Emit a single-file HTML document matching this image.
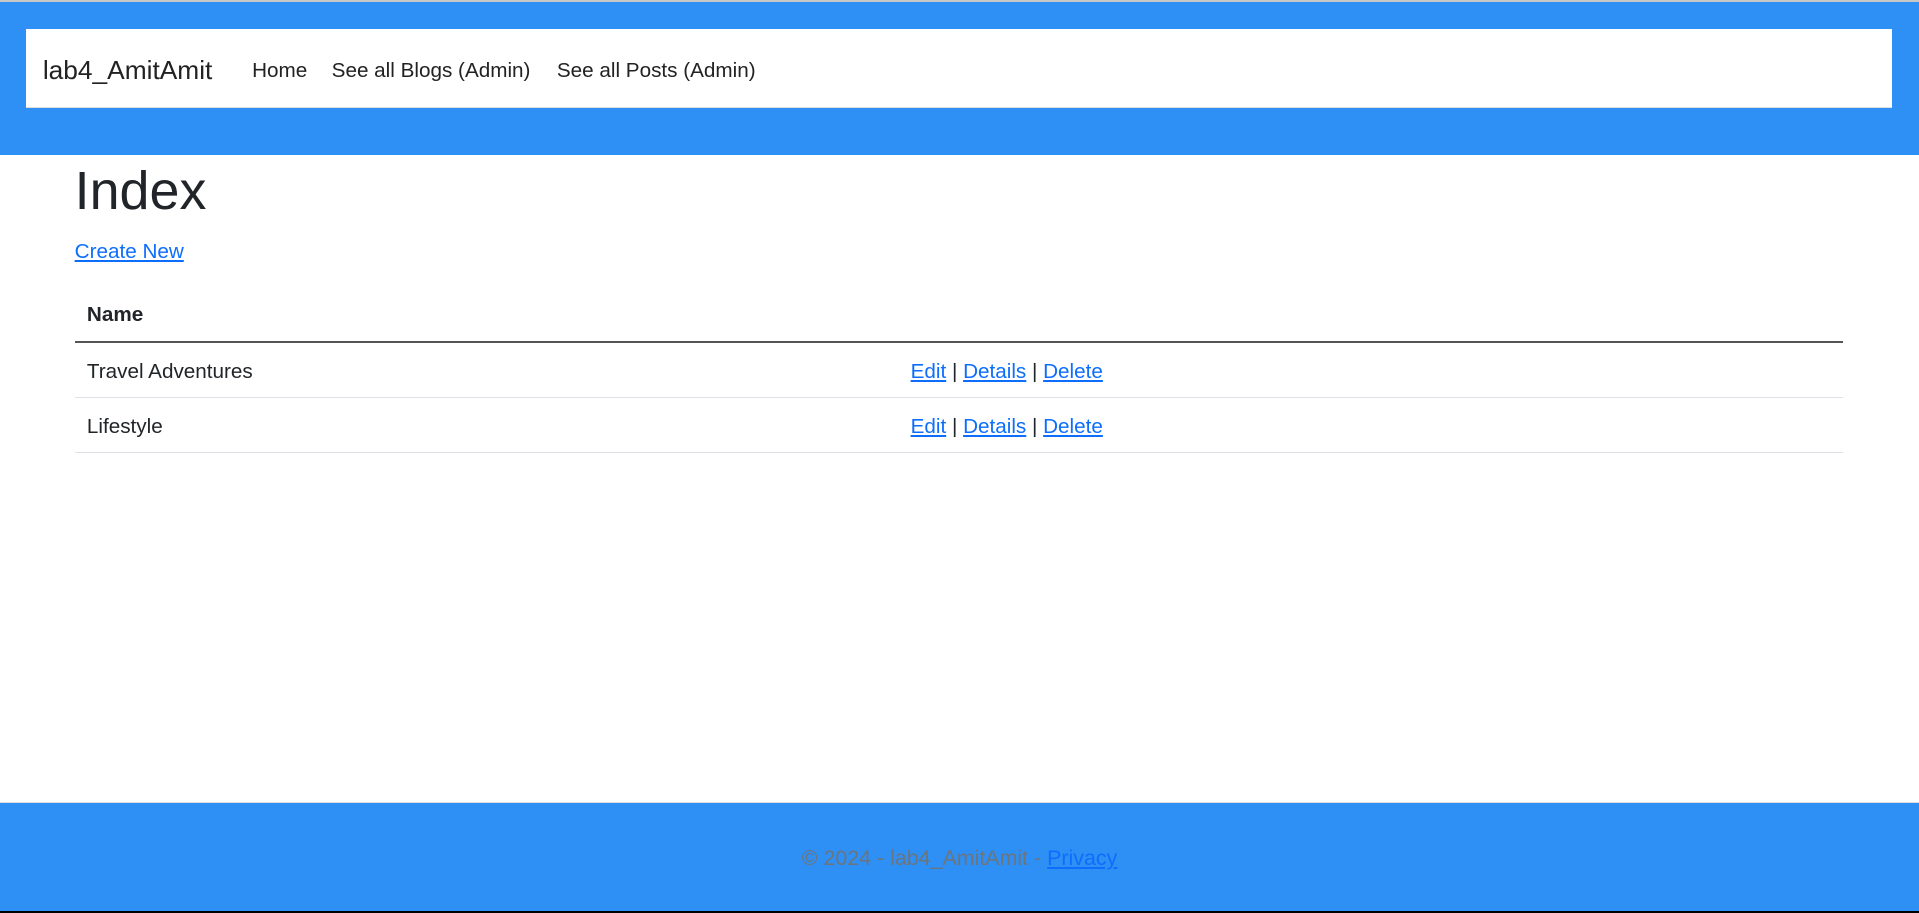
<!DOCTYPE html>
<html><head><meta charset="utf-8"><style>
html,body{margin:0;padding:0;background:#fff;overflow:hidden}
body{zoom:1.2239;width:1568px;height:746px;position:relative;font-family:"Liberation Sans",sans-serif;color:#212529;font-size:16.9px}
.hdr{position:absolute;left:0;top:0;width:1568px;height:127px;background:#2e8ff5;border-top:2px solid #c8c8c8;box-sizing:border-box}
.nav{position:absolute;left:21px;top:22px;width:1525px;height:65px;background:#fff;border-bottom:1px solid #ddd;box-sizing:border-box}
.brand{position:absolute;left:14px;top:21px;font-size:21.5px;line-height:26px;color:#222}
.lk{position:absolute;top:24px;font-size:16.9px;line-height:22px;color:#222}
h1{position:absolute;left:61px;top:131px;margin:0;font-size:44px;font-weight:400;line-height:52px}
a{color:#0d6efd;text-decoration:underline}
.cn{position:absolute;left:61px;top:195px;line-height:22px}
.tbl{position:absolute;left:61px;top:236px;width:1445px}
.r{position:relative;height:45px;border-bottom:1px solid #dee2e6;box-sizing:border-box}
.r.h{height:44px;border-bottom:2px solid #555}
.r span{position:absolute;left:10px;top:13px;line-height:22px}
.r.h span{top:11px}
.r .c2{left:683px}
.ftr{position:absolute;left:0;top:655px;width:1568px;height:89px;background:#2e8ff5;border-top:1px solid #ddd;box-sizing:border-box}
.ftr div{position:absolute;left:0;right:0;top:35px;text-align:center;color:#6c757d;line-height:22px;font-size:17.5px}
.blk{position:absolute;left:0;top:744px;width:1568px;height:2px;background:#000}
</style></head><body>
<div class="hdr"><div class="nav">
<div class="brand">lab4_AmitAmit</div>
<div class="lk" style="left:185px">Home</div>
<div class="lk" style="left:250px">See all Blogs (Admin)</div>
<div class="lk" style="left:434px">See all Posts (Admin)</div>
</div></div>
<h1>Index</h1>
<a class="cn">Create New</a>
<div class="tbl">
<div class="r h"><span style="font-weight:bold">Name</span></div>
<div class="r"><span>Travel Adventures</span><span class="c2"><a>Edit</a> | <a>Details</a> | <a>Delete</a></span></div>
<div class="r"><span>Lifestyle</span><span class="c2"><a>Edit</a> | <a>Details</a> | <a>Delete</a></span></div>
</div>
<div class="ftr"><div>© 2024 - lab4_AmitAmit - <a>Privacy</a></div></div>
<div class="blk"></div>
</body></html>
